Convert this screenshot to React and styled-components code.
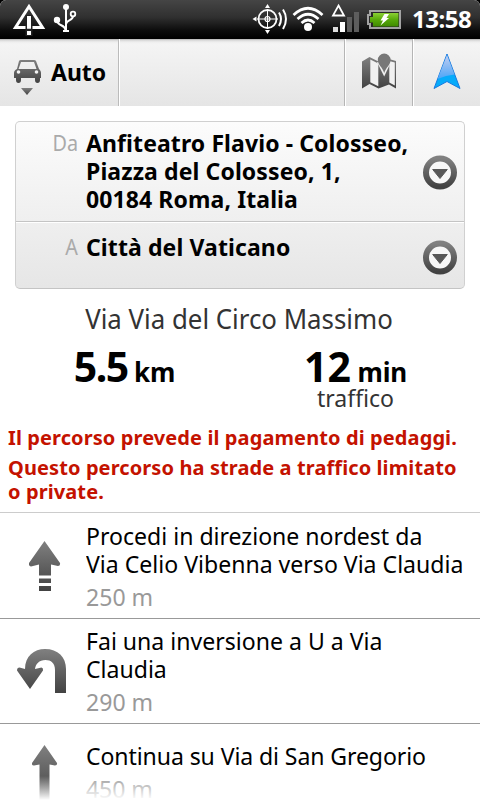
import React from 'react';
import styled, {createGlobalStyle} from 'styled-components';

const Warnings = [
	["Il percorso prevede il pagamento di pedaggi."],
	["Questo percorso ha strade a traffico limitato", "o private."],
];

const Steps = [
	{icon: "start", lines: ["Procedi in direzione nordest da", "Via Celio Vibenna verso Via Claudia"], distance: "250 m"},
	{icon: "uturn", lines: ["Fai una inversione a U a Via", "Claudia"], distance: "290 m"},
	{icon: "straight", lines: ["Continua su Via di San Gregorio"], distance: "450 m"},
];

function App() {
	return (
		<Page>
			<Global/>
			<Gradients/>
			<StatusBar>
				<StatusLeft/>
				<StatusRight/>
				<Clock>13:58</Clock>
			</StatusBar>
			<Toolbar>
				<ModeButton>
					<CarIcon/>
					<ModeLabel>Auto</ModeLabel>
				</ModeButton>
				<ToolButton><MapIcon/></ToolButton>
				<ToolButton><NavIcon/></ToolButton>
			</Toolbar>
			<Card>
				<Place $height={100}>
					<PlaceLabel>Da</PlaceLabel>
					<PlaceName>
						<Line>Anfiteatro Flavio - Colosseo,</Line>
						<Line>Piazza del Colosseo, 1,</Line>
						<Line>00184 Roma, Italia</Line>
					</PlaceName>
					<DropIcon/>
				</Place>
				<Place $height={66} $last>
					<PlaceLabel>A</PlaceLabel>
					<PlaceName><Line>Città del Vaticano</Line></PlaceName>
					<DropIcon/>
				</Place>
			</Card>
			<Via>Via Via del Circo Massimo</Via>
			<Summary>
				<Stat><Big $tight>5.5</Big> km</Stat>
				<Stat><Big>12</Big> min<Note>traffico</Note></Stat>
			</Summary>
			<WarningList>
				{Warnings.map((lines) => (
					<Warning key={lines[0]}>
						{lines.map((text) => <Line key={text}>{text}</Line>)}
					</Warning>
				))}
			</WarningList>
			{Steps.map((step) => (
				<Step key={step.icon}>
					<StepIcon $name={step.icon}><TurnIcon name={step.icon}/></StepIcon>
					<StepText $name={step.icon}>
						{step.lines.map((text) => <Line key={text}>{text}</Line>)}
						<Distance>{step.distance}</Distance>
					</StepText>
				</Step>
			))}
			<Fade/>
		</Page>
	)
}

export default App;

// shared gradients for every icon
function Gradients() {
	return (
		<HiddenSvg width="0" height="0">
			<defs>
				<linearGradient id="gray" x1="0" y1="0" x2="0" y2="1">
					<stop offset="0" stopColor="#808080"/>
					<stop offset="1" stopColor="#424242"/>
				</linearGradient>
				<linearGradient id="blueTop" x1="0" y1="0" x2="0" y2="1">
					<stop offset="0" stopColor="#c4cdf0"/>
					<stop offset="1" stopColor="#4aa5f8"/>
				</linearGradient>
				<linearGradient id="battery" x1="0" y1="0" x2="0" y2="1">
					<stop offset="0" stopColor="#8bd035"/>
					<stop offset="0.5" stopColor="#57a90a"/>
					<stop offset="1" stopColor="#3f8a00"/>
				</linearGradient>
			</defs>
		</HiddenSvg>
	)
}

function StatusLeft() {
	return (
		<svg width="90" height="38" fill="none" stroke="#fff">
			<path d="M29 6.500 42.500 27.500H15.500Z" strokeWidth="3"/>
			<path d="M29 15V36" stroke="#222" strokeWidth="7"/>
			<path d="M29 16V28.700M29 31V35" strokeWidth="4"/>
			<path d="M66 6V31" strokeWidth="2"/>
			<path d="M57 20C57 26.500 65 24 65.500 30M73 16C73 21 67 19 66 24" strokeWidth="2"/>
			<circle cx="66" cy="7" r="3" fill="#fff" stroke="none"/>
			<circle cx="57" cy="20" r="3.200" fill="#fff" stroke="none"/>
			<circle cx="73" cy="14" r="2.300" strokeWidth="1.800"/>
			<path d="M63 31H69" strokeWidth="2"/>
		</svg>
	)
}

function StatusRight() {
	return (
		<RightSvg width="155" height="38" viewBox="250 0 155 38" fill="none" stroke="#fff">
			<circle cx="267.500" cy="19" r="9" strokeWidth="1.800"/>
			<circle cx="267.500" cy="19" r="2.500" strokeWidth="1.200"/>
			<path d="M267.500 9V29M257 19H278" strokeWidth="1"/>
			<path d="M265 8 267.500 4 270 8ZM265 30 267.500 34 270 30ZM256.500 16.500 252.500 19 256.500 21.500Z" fill="#fff" stroke="none"/>
			<path d="M279 12.500Q283 19 279 26M283 9.500Q289 19 283 29" strokeWidth="2"/>
			<circle cx="308" cy="27" r="4" fill="#fff" stroke="none"/>
			<path d="M293.500 15Q308 1.500 322.500 15M297.500 19Q308 9.500 318.500 19M301.500 23Q308 17 314.500 23" strokeWidth="2.700"/>
			<path d="M338.500 5.500 344 15.500H333Z" strokeWidth="1.800"/>
			<g stroke="none">
				<path d="M333 27H338V32H333Z" fill="#ddd"/>
				<path d="M340 22H345V32H340Z" fill="#fff"/>
				<path d="M347 17H352V32H347ZM354 12H359V32H354Z" fill="#5d5d5d"/>
			</g>
			<path d="M370 11H400V28H370V24H368V15H370Z" fill="#292929" stroke="#a3a3a3" strokeWidth="2"/>
			<path d="M373 13H398.500V26.500H373V22.500H370V17H373Z" fill="url(#battery)" stroke="none"/>
			<path d="M384.500 14H389L386.500 18H389L380.500 25.500 383 20.500H380.500Z" fill="#fff" stroke="none"/>
		</RightSvg>
	)
}

function CarIcon() {
	return (
		<svg width="28" height="38" viewBox="0 0 28 38">
			<path d="M5 3 3 11C1 12 0 13 0 15V20H2V22Q2 25 4.500 25T7 22V20H21V22Q21 25 23.500 25T26 22V20H27V15C27 13 26 12 25 11L22 3Q21.500 2 20 2H7Q5.500 2 5 3ZM7 4H20L22.500 11H4.500Z" transform="translate(0 -2)" fill="url(#gray)" fillRule="evenodd"/>
			<circle cx="4.500" cy="12" r="1.800" fill="#f4f4f4"/>
			<circle cx="22.500" cy="12" r="1.800" fill="#f4f4f4"/>
			<path d="M7 28H19L13 35Z" fill="url(#gray)"/>
		</svg>
	)
}

function MapIcon() {
	return (
		<svg width="36" height="38" viewBox="0 0 36 38">
			<path d="M1 8.500 8.500 4 17.500 8.500 28 6 35 8V35.500L28 31.500 17.500 35.500 8.500 31 1 35.500Z" fill="url(#gray)"/>
			<path d="M9.300 6.500 17.300 10.500V33.300L9.300 29.300ZM28.300 8 33.800 9.500V32.500L28.300 29.500Z" fill="#f1f1f1"/>
			<path d="M16 9 23.200 23.500 30 9Z" fill="#f1f1f1"/>
			<path d="M23.200 20C21.500 14 16.800 12 16.800 7A6.400 6.400 0 0 1 29.600 7C29.600 12 25 14 23.200 20Z" fill="#777"/>
		</svg>
	)
}

function NavIcon() {
	return (
		<svg width="28" height="38" viewBox="0 0 28 38">
			<path d="M14 1 27 35.500 14 28.500 1 35.500Z" fill="#06abfa" stroke="#1979df"/>
			<path d="M14 2 21.500 21.500Q13 22 4.500 26Z" fill="url(#blueTop)"/>
		</svg>
	)
}

function DropIcon() {
	return (
		<DropSvg width="34" height="35" viewBox="0 0 34 35">
			<circle cx="17" cy="17.500" r="14" fill="#f7f7f7" stroke="url(#gray)" strokeWidth="6"/>
			<path d="M9.700 14.500H24.300L17 23.500Z" fill="#585858" stroke="#585858" strokeLinejoin="round"/>
		</DropSvg>
	)
}

function TurnIcon({name}) {
	if (name === "start") return (
		<svg width="32" height="50" viewBox="0 0 32 50" fill="url(#gray)">
			<path d="M15.500 0 31 22Q31.500 25 29 25L22 23.500V34.500H10V23.500L2 25.500Q-.5 25 0 22ZM10 37.500H22V42H10ZM10 45H22V50H10Z"/>
		</svg>
	)
	if (name === "uturn") return (
		<svg width="49" height="44" viewBox="0 0 49 44" fill="url(#gray)">
			<path d="M8 20C8 7 17 0 28 0C41 0 49 8 49 20V44H38V21C38 14 34 11 28.500 11C22 11 18.500 15 18 20L24.500 18.500Q26.500 19 26 21.500L13 40 0 21.500Q0 18.500 2.500 18.500Z"/>
		</svg>
	)
	return (
		<svg width="26" height="56" viewBox="0 0 26 56" fill="url(#gray)">
			<path d="M12.500 0 25 18Q25.500 20.500 23 20.500L17.500 19.500V56H7.500V19.500L2 20.500Q-.5 20.500 0 18Z"/>
		</svg>
	)
}

const Global = createGlobalStyle`
	body {
		margin:0;
		background:#000;
	}
`;

const Page = styled.div`
	position:relative;
	width:480px;
	height:800px;
	overflow:hidden;
	background:#fff;
	color:#000;
	font-family:"Noto Sans", sans-serif;
`;

const HiddenSvg = styled.svg`
	position:absolute;
`;

const StatusBar = styled.header`
	display:flex;
	height:38px;
	box-sizing:border-box;
	background:linear-gradient(#454545, #303030 45%, #0c0c0c 80%, #000);
	border-radius:6px 6px 0 0;
	box-shadow:0 0 0 6px #000;
	clip-path:inset(0 0 -1px 0);
`;

const RightSvg = styled.svg`
	margin-left:160px;
`;

const Clock = styled.div`
	margin-left:7px;
	color:#fff;
	font-size:24px;
	font-weight:bold;
	line-height:38px;
	letter-spacing:-.5px;
`;

const Toolbar = styled.nav`
	display:flex;
	height:68px;
	box-sizing:border-box;
	background:linear-gradient(#000 0, #aaa 1px, #d5d5d5 2px, #eee 4px, #f4f4f4 6px, #e5e5e5);
`;

const ModeButton = styled.div`
	display:flex;
	width:119px;
	box-sizing:border-box;
	padding:22px 0 0 14px;
	margin-right:auto;
	border-right:1px solid #bbb;
	box-shadow:1px 0 #fff;
`;

const ModeLabel = styled.div`
	margin:-4px 0 0 9px;
	font-size:23px;
	font-weight:bold;
	line-height:32px;
`;

const ToolButton = styled.div`
	display:flex;
	justify-content:center;
	width:68px;
	box-sizing:border-box;
	padding-top:15px;
	border-left:1px solid #b5b5b5;
	box-shadow:inset 1px 0 #fff;
`;

const Card = styled.section`
	margin:15px 15px 0;
	border:1px solid #d0d0d0;
	border-bottom-color:#c4c4c4;
	border-radius:5px;
	background:linear-gradient(#fcfcfc, #e6e6e6);
`;

const Place = styled.div`
	display:flex;
	height:${props => props.$height}px;
	box-sizing:border-box;
	padding:${props => props.$last ? "11px 7px 2px 0" : "7px 7px 0 0"};
	border-bottom:${props => props.$last ? "none" : "1px solid #c4c4c4"};
	box-shadow:${props => props.$last ? "inset 0 1px #fff" : "none"};
`;

const PlaceLabel = styled.div`
	width:62px;
	margin-right:8px;
	color:#aaa;
	font-size:22.500px;
	line-height:28px;
	text-align:right;
	transform:scaleX(.88);
	transform-origin:right;
`;

const PlaceName = styled.div`
	flex:1;
	font-size:23px;
	font-weight:bold;
	line-height:28px;
	letter-spacing:.1px;
`;

const Line = styled.div`
	white-space:nowrap;
`;

const DropSvg = styled.svg`
	align-self:center;
	margin-top:-5px;
`;

const Via = styled.div`
	margin:12px 2px 0 0;
	color:#333;
	font-size:27px;
	line-height:36px;
	text-align:center;
	transform:scaleX(.957);
`;

const Summary = styled.div`
	display:flex;
	padding:0 9px;
	height:85px;
`;

const Stat = styled.div`
	flex:1;
	padding-top:7px;
	font-size:26px;
	font-weight:bold;
	line-height:44px;
	text-align:center;
	letter-spacing:-.2px;
`;

const Big = styled.span`
	font-size:41px;
	letter-spacing:${props => props.$tight ? "-1.6px" : "0"};
`;

const Note = styled.div`
	margin-top:-10px;
	color:#333;
	font-size:24px;
	font-weight:normal;
	line-height:28px;
	letter-spacing:0;
	transform:scaleX(.96);
`;

const WarningList = styled.div`
	height:90px;
	padding:4px 8px 0;
	box-sizing:border-box;
	color:#c41200;
`;

const Warning = styled.div`
	margin-bottom:6px;
	font-size:20px;
	font-weight:bold;
	line-height:24px;
	letter-spacing:.1px;
`;

const Step = styled.div`
	display:flex;
	height:105px;
	box-sizing:border-box;
	border-top:1px solid #999;

	${WarningList} + & {
		height:106px;
		border-top-color:#ccc;
	}
`;

const iconPadding = {
	start: "28px 0 0 29px",
	uturn: "30px 0 0 17px",
	straight: "21px 0 0 32px",
};

const textTop = {start: 9, uturn: 8, straight: 18};

const StepIcon = styled.div`
	width:86px;
	box-sizing:border-box;
	padding:${props => iconPadding[props.$name]};
`;

// the regular weight is set slightly condensed
const StepText = styled.div`
	padding-top:${props => textTop[props.$name]}px;
	font-size:24px;
	line-height:28px;
	letter-spacing:${props => props.$name === "straight" ? "-.1px" : "0"};
	transform:scaleX(.961);
	transform-origin:left;
`;

const Distance = styled.div`
	margin-top:5px;
	color:#999;
`;

const Fade = styled.div`
	position:absolute;
	left:0;
	right:0;
	bottom:0;
	height:24px;
	background:linear-gradient(rgba(255,255,255,0), #fff);
`;
